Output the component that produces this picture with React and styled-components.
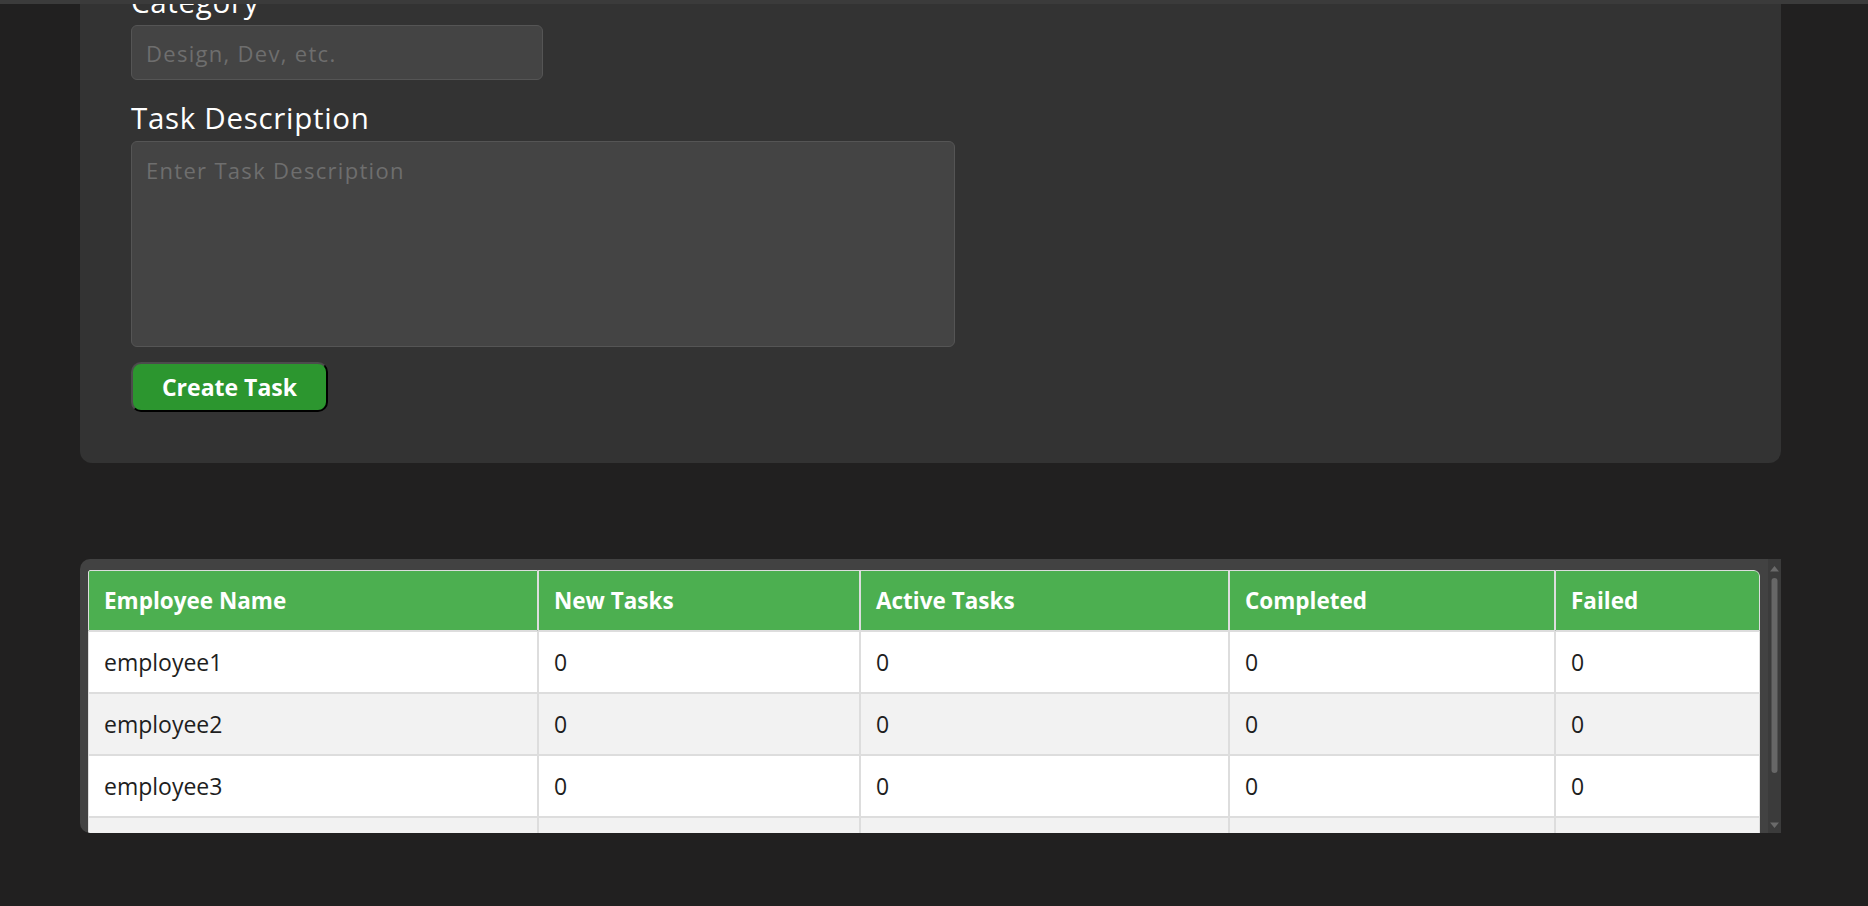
import React from "react";
import styled, { createGlobalStyle } from "styled-components";

const employees = [
  { name: "employee1", newTask: 0, active: 0, completed: 0, failed: 0 },
  { name: "employee2", newTask: 0, active: 0, completed: 0, failed: 0 },
  { name: "employee3", newTask: 0, active: 0, completed: 0, failed: 0 },
  { name: "employee4", newTask: 0, active: 0, completed: 0, failed: 0 },
  { name: "employee5", newTask: 0, active: 0, completed: 0, failed: 0 },
];

const columns = [
  { key: "name", label: "Employee Name", width: 450 },
  { key: "newTask", label: "New Tasks", width: 322 },
  { key: "active", label: "Active Tasks", width: 369 },
  { key: "completed", label: "Completed", width: 326 },
  { key: "failed", label: "Failed", width: 205 },
];

// the browser hides real scrollbars in the screenshot, so the rail is drawn
const ScrollRail = () => (
  <Rail aria-hidden="true">
    <svg width="13" height="274" viewBox="0 0 13 274">
      <path d="M2 12.5 L6.5 7 L11 12.5 Z" fill="#6a6a6a" />
      <rect x="3.5" y="19" width="6" height="195" rx="3" fill="#676767" />
      <path d="M2 263.5 L6.5 269 L11 263.5 Z" fill="#6a6a6a" />
    </svg>
  </Rail>
);

const App = () => {
  return (
    <>
      <GlobalStyle />
      <TopEdge />
      <Page>
        <FormPanel>
          <Field>
            <Label>Category</Label>
            <Input type="text" placeholder="Design, Dev, etc." />
          </Field>
          <Field>
            <Label>Task Description</Label>
            <TextArea placeholder="Enter Task Description" />
          </Field>
          <CreateButton>Create Task</CreateButton>
        </FormPanel>

        <TableWrap>
          <TableBox>
            <Table>
              <thead>
                <tr>
                  {columns.map((c) => (
                    <Th key={c.key} $width={c.width}>
                      {c.label}
                    </Th>
                  ))}
                </tr>
              </thead>
              <tbody>
                {employees.map((emp) => (
                  <Row key={emp.name}>
                    {columns.map((c) => (
                      <Td key={c.key}>{emp[c.key]}</Td>
                    ))}
                  </Row>
                ))}
              </tbody>
            </Table>
          </TableBox>
          <ScrollRail />
        </TableWrap>
      </Page>
    </>
  );
};

const GlobalStyle = createGlobalStyle`
  * {
    box-sizing: border-box;
  }
  body {
    margin: 0;
    background-color: #212020;
    font-family: "Open Sans", "Liberation Sans", sans-serif;
    color: #fff;
  }
`;

const TopEdge = styled.div`
  position: fixed;
  top: 0;
  left: 0;
  right: 0;
  height: 4px;
  background-color: #3b3b3b;
  z-index: 10;
`;

const Page = styled.main`
  width: 1701px;
  margin: -16px 0 0 80px;
  padding-bottom: 80px;
`;

const FormPanel = styled.section`
  background-color: #333;
  border-radius: 0 0 12px 12px;
  padding: 0 51px 51px;
  display: flex;
  flex-direction: column;
  align-items: flex-start;
`;

const Field = styled.div`
  display: flex;
  flex-direction: column;
  margin-bottom: 20px;
  &:last-of-type {
    margin-bottom: 15px;
  }
`;

const Label = styled.label`
  font-size: 29.5px;
  line-height: 36px;
  margin-bottom: 5px;
  color: #fff;
  letter-spacing: 0.7px;
`;

const fieldBase = `
  background-color: #444;
  border: 1px solid #555;
  border-radius: 6px;
  color: #fff;
  font-family: "Open Sans", "Liberation Sans", sans-serif;
  font-size: 22px;
  letter-spacing: 1.3px;
  padding: 14px 14px;
  outline: none;
  &::placeholder {
    color: #6e6e6e;
  }
`;

const Input = styled.input`
  ${fieldBase}
  width: 412px;
  height: 55px;
`;

const TextArea = styled.textarea`
  ${fieldBase}
  width: 824px;
  height: 206px;
  padding-top: 13px;
  resize: none;
`;

const CreateButton = styled.button`
  width: 197px;
  height: 50px;
  background-color: #2c962f;
  color: #fff;
  font-family: "Open Sans", "Liberation Sans", sans-serif;
  font-size: 23px;
  font-weight: 700;
  border-radius: 10px;
  border-style: solid;
  border-width: 2px;
  border-color: #4c4c4c #000 #000 #4c4c4c;
  cursor: pointer;
`;

const TableWrap = styled.div`
  position: relative;
  margin-top: 96px;
`;

const TableBox = styled.div`
  height: 274px;
  overflow-y: auto;
  background-color: #424242;
  border-radius: 10px;
  padding: 11px 8px;
  scrollbar-width: none;
`;

const Rail = styled.div`
  position: absolute;
  top: 0;
  right: 0;
  width: 13px;
  height: 274px;
  background-color: #3b3b3b;
  svg {
    display: block;
  }
`;

const Table = styled.table`
  width: 1672px;
  table-layout: fixed;
  border-collapse: separate;
  border-spacing: 0;
  border-radius: 2px 6px 0 0;
  overflow: hidden;
  color: #1e1e1e;
`;

const Th = styled.th`
  width: ${(p) => p.$width}px;
  background-color: #4caf50;
  color: #fff;
  text-align: left;
  font-size: 22.5px;
  font-weight: 700;
  line-height: 28px;
  padding: 16px 15px 15px;
  border: 1px solid #ddd;
  &:first-child {
    border-top-left-radius: 2px;
  }
  &:last-child {
    border-top-right-radius: 6px;
  }
`;

const Row = styled.tr`
  background-color: #fff;
  &:nth-child(even) {
    background-color: #f2f2f2;
  }
`;

const Td = styled.td`
  font-size: 23px;
  line-height: 28px;
  padding: 16px 15px;
  border: 1px solid #ddd;
`;

export default App;
